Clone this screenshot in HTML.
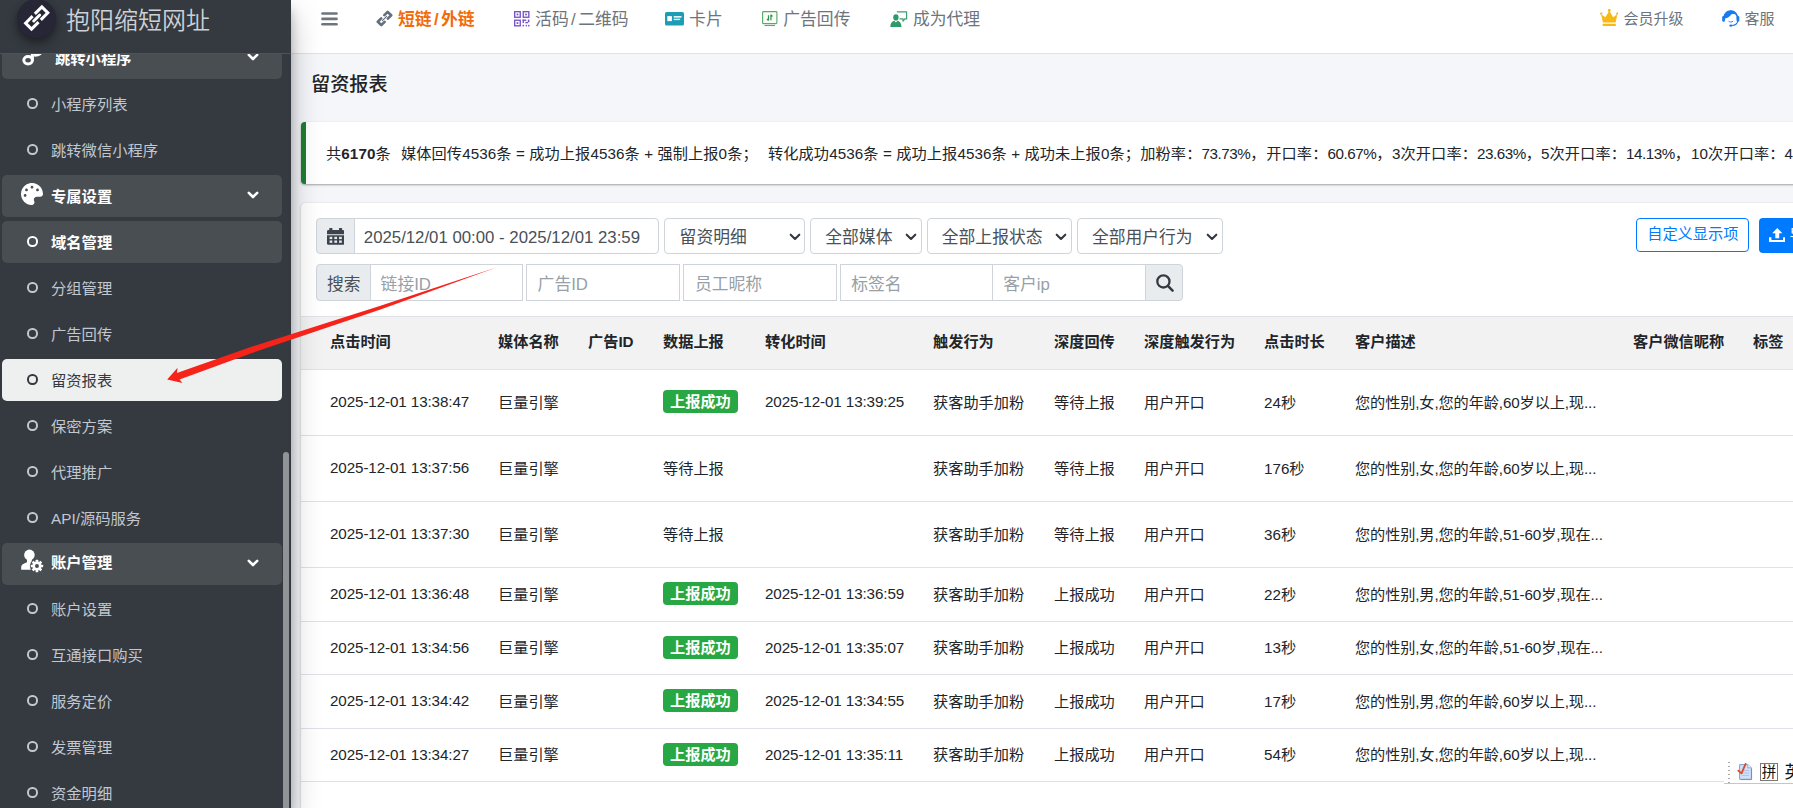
<!DOCTYPE html>
<html lang="zh-CN">
<head>
<meta charset="utf-8">
<title>留资报表</title>
<style>
*{box-sizing:border-box;margin:0;padding:0}
html,body{width:1793px;height:808px;overflow:hidden}
body{background:#f4f6f9;font-family:"Liberation Sans","Noto Sans CJK SC",sans-serif;color:#212529;position:relative;font-size:15.2px}
svg{display:block}
/* sidebar */
#side{position:absolute;left:0;top:0;width:290.500px;height:808px;background:#343a40;z-index:20;box-shadow:0 14px 28px rgba(0,0,0,.25),0 10px 10px rgba(0,0,0,.22);overflow:hidden}
#brand{position:absolute;left:0;top:0;width:291px;height:54px;border-bottom:1px solid #4b545c;background:#343a40;z-index:3}
#logo{position:absolute;left:17px;top:-1px;width:39px;height:39px;border-radius:50%;background:#272637;box-shadow:0 3px 6px rgba(0,0,0,.28),0 7px 12px rgba(0,0,0,.22)}
#logo svg{position:absolute;left:0;top:0;width:39px;height:39px}
#brand .bt{position:absolute;left:66px;top:5px;font-size:24px;line-height:32px;font-weight:350;color:#cdd1d6;white-space:nowrap}
.ni{position:absolute;left:2px;width:280px;height:42px;border-radius:5px;color:#c2c7d0;font-size:15.3px;line-height:42px;white-space:nowrap}
.ni.hd{background:#494e53;color:#fff;font-weight:700}
.ni.act{background:#eeefef;color:#343a40}
.ni .tx{position:absolute;left:49px;top:.5px}
.ni .dot{position:absolute;left:25.300px;top:15.300px;width:10.400px;height:10.400px;border:2px solid #c2c7d0;border-radius:50%}
.ni.hd .dot{border-color:#fff}
.ni.act .dot{border-color:#343a40}
.ni .chev{position:absolute;left:245.300px;top:15.600px;width:12px;height:9px}
.ni .ic{position:absolute}
#sbar{position:absolute;left:282.500px;top:452px;width:6.500px;height:380px;border-radius:4px;background:#909497;z-index:4}
/* navbar */
#top{position:absolute;left:290px;top:0;width:1503px;height:54px;background:#fff;border-bottom:1px solid #dee2e6;z-index:5}
#top .it{position:absolute;top:1px;height:38px;line-height:38px;font-size:16.8px;color:#6c757d;white-space:nowrap}
#top .it.on{color:#f26b0a;font-weight:700}
#top .it.sm{font-size:15px}
#top .it i{font-style:normal;padding:0 2.400px}
#top svg{position:absolute}
/* content */
#title{position:absolute;left:311px;top:69px;font-size:19.2px;line-height:32px;color:#212529;font-weight:500;white-space:nowrap}
#callout{position:absolute;left:301px;top:122.400px;width:1600px;height:61.800px;background:#fff;border-left:5px solid #1e7e34;border-radius:4px;box-shadow:0 1px 3px rgba(0,0,0,.12),0 1px 2px rgba(0,0,0,.24)}
#callout span{position:absolute;top:15.300px;letter-spacing:.1px;line-height:32px;font-size:15.2px;white-space:nowrap;color:#212529}
#callout b{font-weight:700}
#callout i{font-style:normal;letter-spacing:-.45px}
#card{position:absolute;left:301px;top:203px;width:1600px;height:700px;background:#fff;border-radius:4px;box-shadow:0 0 1px rgba(0,0,0,.125),0 1px 3px rgba(0,0,0,.2)}
.fld{position:absolute;height:36.400px;border:1px solid #ced4da;background:#fff;font-size:16.8px;line-height:35px;color:#495057;white-space:nowrap;overflow:hidden}
.fld span{position:absolute;top:1.400px}
.fld.ad{background:#e9ecef}
.fld.ph{color:#989fa6}
.fld.sel{border-radius:4px}
.fld svg{position:absolute}
.btn{position:absolute;height:34.500px;border-radius:4px;font-size:15.2px;line-height:32px;white-space:nowrap}
#tbl{position:absolute;left:0;top:113px;width:1600px;border-collapse:collapse;table-layout:fixed}
#tbl th,#tbl td{text-align:left;padding:0 0 4px 0;white-space:nowrap;overflow:hidden;font-size:15.2px;color:#212529;vertical-align:middle}
#tbl th{padding-bottom:6px;height:53px;background:#f2f2f2;font-weight:700;border-top:1px solid #dee2e6;border-bottom:1px solid #dee2e6}
#tbl td{border-bottom:1px solid #dee2e6;padding-bottom:3.400px}
#tbl tr.a td{height:66px}
#tbl tr.b td{height:53.500px}
#tbl tr.c td{height:69px}
.bdg{display:inline-block;background:#28a745;color:#fff;font-weight:700;font-size:15.2px;line-height:23px;height:23px;padding:0 7px;border-radius:4px;position:relative;top:1px}
.num{letter-spacing:-.1px;position:relative;top:1.200px}
.dsc{letter-spacing:-.12px}
#arrow{position:absolute;left:0;top:0;width:1793px;height:808px;z-index:50;pointer-events:none}
#ime{position:absolute;left:1724px;top:756px;width:80px;height:28px;background:#fff;border-bottom:1px solid #c6c6c6;z-index:40;font-size:15px;color:#111}
#ime span{position:absolute;white-space:nowrap}
</style>
</head>
<body>
<div id="side">
<div id="brand"><div id="logo"><svg viewBox="-19.500 -19.500 39 39"><g transform="translate(.2 -.5) rotate(-45)" fill="none" stroke="#fff" stroke-width="3"><path d="M-1.600 -4.200H-11.500V4.200H-1.600"/><path d="M1.600 -4.200H11.500V4.200H1.600"/><path d="M-4.200 0H4.200" stroke-linecap="round"/></g></svg></div><div class="bt">抱阳缩短网址</div></div>
<div class="ni hd" style="top:37px"><svg class="ic" style="left:19px;top:4px;width:24px;height:26px" viewBox="0 0 24 26"><ellipse cx="7.100" cy="19.300" rx="4.300" ry="3.700" fill="none" stroke="#fff" stroke-width="3"/><rect x="9.900" y="4" width="3" height="15.500" fill="#fff"/><path d="M12.900 11 C15.500 12.200 18.500 12.200 20.400 11.200 L20.400 13.800 C18 15.400 15 15.900 12.900 15.600Z" fill="#fff"/></svg><span class="tx" style="left:53px">跳转小程序</span><svg class="chev" viewBox="0 0 12 9"><path d="M1.800 1.800 L6 6 L10.200 1.800" fill="none" stroke="#fff" stroke-width="2.600" stroke-linecap="round" stroke-linejoin="round"/></svg></div>
<div class="ni" style="top:83px"><span class="dot"></span><span class="tx">小程序列表</span></div>
<div class="ni" style="top:129px"><span class="dot"></span><span class="tx">跳转微信小程序</span></div>
<div class="ni hd" style="top:175px"><svg class="ic" style="left:19.300px;top:8px;width:22px;height:22px" viewBox="0 0 512 512"><path fill="#fff" d="M204.3 5C104.9 24.4 24.8 104.3 5.2 203.4c-37 187 131.7 326.4 258.8 306.700 41.200-6.400 61.400-54.600 42.500-91.700-23.100-45.400 9.900-98.400 60.900-98.400h79.700c35.800 0 64.800-29.600 64.900-65.300C511.500 97.100 368.100-26.900 204.300 5zM96 320c-17.700 0-32-14.300-32-32s14.300-32 32-32 32 14.300 32 32-14.300 32-32 32zm32-128c-17.700 0-32-14.300-32-32s14.300-32 32-32 32 14.300 32 32-14.300 32-32 32zm128-64c-17.700 0-32-14.300-32-32s14.300-32 32-32 32 14.300 32 32-14.300 32-32 32zm128 64c-17.700 0-32-14.300-32-32s14.300-32 32-32 32 14.300 32 32-14.300 32-32 32z"/></svg><span class="tx">专属设置</span><svg class="chev" viewBox="0 0 12 9"><path d="M1.800 1.800 L6 6 L10.200 1.800" fill="none" stroke="#fff" stroke-width="2.600" stroke-linecap="round" stroke-linejoin="round"/></svg></div>
<div class="ni hd" style="top:221px"><span class="dot"></span><span class="tx">域名管理</span></div>
<div class="ni" style="top:267px"><span class="dot"></span><span class="tx">分组管理</span></div>
<div class="ni" style="top:313px"><span class="dot"></span><span class="tx">广告回传</span></div>
<div class="ni act" style="top:359px"><span class="dot"></span><span class="tx">留资报表</span></div>
<div class="ni" style="top:405px"><span class="dot"></span><span class="tx">保密方案</span></div>
<div class="ni" style="top:451px"><span class="dot"></span><span class="tx">代理推广</span></div>
<div class="ni" style="top:497px"><span class="dot"></span><span class="tx">API/源码服务</span></div>
<div class="ni hd" style="top:543px"><svg class="ic" style="left:17px;top:5px;width:26px;height:26px" viewBox="0 0 26 26"><g fill="#fff"><ellipse cx="10.400" cy="6.900" rx="5.300" ry="5.300"/><path d="M2.200 21.700V19.300C2.200 16.600 4.800 15.500 8 14.300V10.500H12.800V14.300C14.200 14.700 15.400 15.200 16.500 15.900L14 21.700Z"/></g><circle cx="17.950" cy="18" r="7.100" fill="#494e53"/><g transform="translate(17.950 18)" fill="#fff"><circle r="4.500"/><rect x="-1.350" y="-6.150" width="2.700" height="3" rx=".5" transform="rotate(0)"/><rect x="-1.350" y="-6.150" width="2.700" height="3" rx=".5" transform="rotate(45)"/><rect x="-1.350" y="-6.150" width="2.700" height="3" rx=".5" transform="rotate(90)"/><rect x="-1.350" y="-6.150" width="2.700" height="3" rx=".5" transform="rotate(135)"/><rect x="-1.350" y="-6.150" width="2.700" height="3" rx=".5" transform="rotate(180)"/><rect x="-1.350" y="-6.150" width="2.700" height="3" rx=".5" transform="rotate(225)"/><rect x="-1.350" y="-6.150" width="2.700" height="3" rx=".5" transform="rotate(270)"/><rect x="-1.350" y="-6.150" width="2.700" height="3" rx=".5" transform="rotate(315)"/></g><circle cx="17.950" cy="18" r="2" fill="#494e53"/></svg><span class="tx" style="top:-.6px">账户管理</span><svg class="chev" viewBox="0 0 12 9"><path d="M1.800 1.800 L6 6 L10.200 1.800" fill="none" stroke="#fff" stroke-width="2.600" stroke-linecap="round" stroke-linejoin="round"/></svg></div>
<div class="ni" style="top:588px"><span class="dot"></span><span class="tx">账户设置</span></div>
<div class="ni" style="top:634px"><span class="dot"></span><span class="tx">互通接口购买</span></div>
<div class="ni" style="top:680px"><span class="dot"></span><span class="tx">服务定价</span></div>
<div class="ni" style="top:726px"><span class="dot"></span><span class="tx">发票管理</span></div>
<div class="ni" style="top:772px"><span class="dot"></span><span class="tx">资金明细</span></div>
<div id="sbar"></div>
</div>
<div id="top">
<svg style="left:30.5px;top:12px;width:17px;height:14px" viewBox="0 0 17 14"><g stroke="#6c757d" stroke-width="2.600" stroke-linecap="round"><path d="M1.500 1.500H15.500"/><path d="M1.500 6.900H15.500"/><path d="M1.500 12.300H15.500"/></g></svg>
<svg style="left:85.9px;top:10.400px;width:17px;height:17px" viewBox="-8.500 -8.500 17 17"><g transform="rotate(-45)" fill="none" stroke="#65707c" stroke-linecap="round" stroke-linejoin="round"><path d="M-2.300 -2.450H-6.950V2.450H-2.300" stroke-width="2.700"/><path d="M2.300 -2.450H6.950V2.450H2.300" stroke-width="2.700"/><path d="M-3 0H3" stroke-width="1.100"/></g></svg>
<div class="it on" style="left:108.0px">短链<i>/</i>外链</div>
<svg style="left:224.0px;top:11px;width:15.500px;height:15.500px" viewBox="0 0 15 15"><g fill="none" stroke="#7853c6" stroke-width="1.300"><rect x=".65" y=".65" width="5.400" height="5.400"/><rect x="8.950" y=".65" width="5.400" height="5.400"/><rect x=".65" y="8.950" width="5.400" height="5.400"/></g><g fill="#7853c6"><rect x="2.500" y="2.500" width="1.700" height="1.700"/><rect x="10.800" y="2.500" width="1.700" height="1.700"/><rect x="2.500" y="10.800" width="1.700" height="1.700"/><rect x="8.300" y="8.300" width="3.600" height="1.300"/><rect x="8.300" y="8.300" width="1.300" height="3.400"/><rect x="13.400" y="8.300" width="1.500" height="2.600"/><rect x="11" y="10.600" width="2.600" height="1.300"/><rect x="8.300" y="13.400" width="1.400" height="1.500"/><rect x="11.300" y="13.400" width="1.300" height="1.500"/><rect x="13.600" y="13.400" width="1.400" height="1.500"/></g></svg>
<div class="it" style="left:245.1px">活码<i>/</i>二维码</div>
<svg style="left:375.3px;top:12px;width:19px;height:13.500px" viewBox="0 0 19 13.500"><rect width="19" height="13.500" rx="1.600" fill="#1d9db4"/><rect x="2.300" y="4.100" width="4.600" height="5" fill="#fff"/><rect x="8.700" y="4.100" width="7.800" height="1.500" fill="#fff"/><rect x="8.700" y="6.700" width="6.400" height="1.400" fill="#e8f5f8"/></svg>
<div class="it" style="left:399.1px">卡片</div>
<svg style="left:471.7px;top:11px;width:16px;height:15.500px" viewBox="0 0 16 15.500"><rect x=".6" y=".6" width="14.300" height="12" rx=".8" fill="#fbfdf4" stroke="#55aa6c" stroke-width="1.150"/><path d="M2.500 14.500H13" stroke="#55aa6c" stroke-width="1.100"/><g fill="none" stroke="#2f8f58" stroke-width="1.200"><path d="M6.500 9.500V4.200M5 7.800L6.500 9.600"/><path d="M8.900 3.800V9.200M10.400 5.500L8.900 3.700"/></g></svg>
<div class="it" style="left:493.3px">广告回传</div>
<svg style="left:600.0px;top:10.500px;width:18px;height:16.500px" viewBox="0 0 18 16.500"><path d="M6.900 .8H16.600V7.900H14.800L13 10.200V7.900H9.500" fill="none" stroke="#3c9f6f" stroke-width="1.200" stroke-linejoin="round"/><ellipse cx="5.900" cy="6.400" rx="2.700" ry="3.100" fill="#2f9a68"/><path d="M.3 16c0-3.600 1.600-5.700 3.900-6.300l1.700 1.700 1.700-1.700c2.300.6 3.900 2.700 3.900 6.300z" fill="#2f9a68"/></svg>
<div class="it" style="left:622.9px">成为代理</div>
<svg style="left:1309.7px;top:8.600px;width:18.500px;height:17.500px" viewBox="0 0 18.500 17.500"><g fill="#f9b915"><path d="M2.900 13.400L1.100 5.200L5.400 8.300L9.250 1.800L13.100 8.300L17.400 5.200L15.600 13.400z"/><circle cx="1.200" cy="4.600" r="1.200"/><circle cx="9.250" cy="1.400" r="1.400"/><circle cx="17.300" cy="4.600" r="1.200"/><rect x="2.700" y="14.800" width="13.100" height="2.300" rx=".3"/></g></svg>
<div class="it sm" style="left:1333.4px;top:0">会员升级</div>
<svg style="left:1432.4px;top:8.600px;width:17.500px;height:18px" viewBox="0 0 17.500 18"><path d="M2 10.800A6.900 6.900 0 1 1 15.500 10.800" fill="none" stroke="#1a7af0" stroke-width="1.700"/><path d="M2 9.700C1.400 4.800 4.700 1.300 8.700 1.300c2.900 0 5.200 1.500 6.300 4.200-2.400-.9-4.300-.7-5.500-.2-1.800 2.700-4.700 4.200-7.500 4.400z" fill="#1a7af0"/><rect x=".2" y="7" width="2.700" height="5.700" rx="1.300" fill="#1a7af0"/><rect x="14.600" y="7" width="2.700" height="5.700" rx="1.300" fill="#1a7af0"/><path d="M15.700 12.300c-.5 2.500-2.500 3.900-5.600 4.200" fill="none" stroke="#1a7af0" stroke-width="1.100"/><ellipse cx="8.900" cy="16.600" rx="1.500" ry="1.200" fill="#1a7af0"/><path d="M6.900 12.400c1.200.9 2.700.9 3.900 0" fill="none" stroke="#1a7af0" stroke-width=".9" stroke-linecap="round"/></svg>
<div class="it sm" style="left:1454.6px;top:0">客服</div>
</div>
<div id="title">留资报表</div>
<div id="callout"><span style="left:20.0px">共<b>6170</b>条</span><span style="left:95.0px">媒体回传4536条 = 成功上报4536条 + 强制上报0条；</span><span style="left:462.0px">转化成功4536条 = 成功上报4536条 + 成功未上报0条；</span><span style="left:834.3px">加粉率：<i>73.73%</i>，</span><span style="left:960.3px">开口率：<i>60.67%</i>，</span><span style="left:1086.0px">3次开口率：<i>23.63%</i>，</span><span style="left:1235.0px">5次开口率：<i>14.13%</i>，</span><span style="left:1385.0px">10次开口率：4.52%</span></div>
<div id="card">
<div class="fld ad" style="left:15.0px;top:15.0px;width:38.5px;border-radius:4px 0 0 4px"><svg style="left:9.500px;top:9.300px;width:17.400px;height:16.800px" viewBox="0 0 17.400 16.800"><g fill="#3b444d"><rect x="2.300" y="0" width="3.100" height="4.600" rx=".6"/><rect x="12" y="0" width="3.100" height="4.600" rx=".6"/><path d="M1.400 2.100H16A1.400 1.400 0 0 1 17.400 3.500V6.200H0V3.500A1.400 1.400 0 0 1 1.400 2.100z"/><path d="M0 7.300H17.400V15.400A1.400 1.400 0 0 1 16 16.800H1.400A1.400 1.400 0 0 1 0 15.400z"/></g><g fill="#e9ecef"><rect x="2.600" y="8.800" width="2.700" height="2.300"/><rect x="7.350" y="8.800" width="2.700" height="2.300"/><rect x="12.100" y="8.800" width="2.700" height="2.300"/><rect x="2.600" y="12.500" width="2.700" height="2.300"/><rect x="7.350" y="12.500" width="2.700" height="2.300"/><rect x="12.100" y="12.500" width="2.700" height="2.300"/></g></svg></div>
<div class="fld " style="left:52.5px;top:15.0px;width:305.5px;border-radius:0 4px 4px 0"><span class="dt" style="left:9.300px">2025/12/01 00:00 - 2025/12/01 23:59</span></div>
<div class="fld sel" style="left:363.0px;top:15.0px;width:141.0px;"><span style="left:14.6px">留资明细</span><svg style="left:123.5px;top:14.300px;width:12px;height:8px" viewBox="0 0 12 8"><path d="M1.700 1.700L6 6L10.300 1.700" fill="none" stroke="#343a40" stroke-width="2.100" stroke-linecap="round" stroke-linejoin="round"/></svg></div>
<div class="fld sel" style="left:509.4px;top:15.0px;width:111.2px;"><span style="left:13.9px">全部媒体</span><svg style="left:93.7px;top:14.300px;width:12px;height:8px" viewBox="0 0 12 8"><path d="M1.700 1.700L6 6L10.300 1.700" fill="none" stroke="#343a40" stroke-width="2.100" stroke-linecap="round" stroke-linejoin="round"/></svg></div>
<div class="fld sel" style="left:626.2px;top:15.0px;width:144.6px;"><span style="left:13.6px">全部上报状态</span><svg style="left:127.1px;top:14.300px;width:12px;height:8px" viewBox="0 0 12 8"><path d="M1.700 1.700L6 6L10.300 1.700" fill="none" stroke="#343a40" stroke-width="2.100" stroke-linecap="round" stroke-linejoin="round"/></svg></div>
<div class="fld sel" style="left:776.0px;top:15.0px;width:145.8px;"><span style="left:13.9px">全部用户行为</span><svg style="left:128.3px;top:14.300px;width:12px;height:8px" viewBox="0 0 12 8"><path d="M1.700 1.700L6 6L10.300 1.700" fill="none" stroke="#343a40" stroke-width="2.100" stroke-linecap="round" stroke-linejoin="round"/></svg></div>
<div class="fld ad" style="left:15.0px;top:61.2px;width:55.3px;border-radius:4px 0 0 4px"><span style="left:9.900px">搜索</span></div>
<div class="fld ph" style="left:69.3px;top:61.2px;width:152.5px;"><span style="left:9.3px">链接ID</span></div>
<div class="fld ph" style="left:225.1px;top:61.2px;width:153.6px;"><span style="left:10.5px">广告ID</span></div>
<div class="fld ph" style="left:382.2px;top:61.2px;width:153.5px;"><span style="left:10.8px">员工昵称</span></div>
<div class="fld ph" style="left:539.1px;top:61.2px;width:152.8px;"><span style="left:10.1px">标签名</span></div>
<div class="fld ph" style="left:691.0px;top:61.2px;width:153.8px;"><span style="left:10.3px">客户ip</span></div>
<div class="fld ad" style="left:844.0px;top:61.2px;width:38.0px;border-radius:0 4px 4px 0"><svg style="left:8.500px;top:8.300px;width:20px;height:20px" viewBox="0 0 20 20"><circle cx="8.400" cy="8.400" r="6.100" fill="none" stroke="#343a40" stroke-width="2.300"/><path d="M12.900 12.900L17.600 17.600" stroke="#343a40" stroke-width="2.500" stroke-linecap="round"/></svg></div>
<div class="btn" style="left:1335.0px;top:15px;width:113px;height:33.800px;border:1px solid #007bff;color:#007bff;background:#fff"><span style="position:absolute;left:10.200px;top:-1px">自定义显示项</span></div>
<div class="btn" style="left:1458.0px;top:15px;width:90px;background:#007bff;color:#fff;line-height:34px"><svg style="position:absolute;left:9.500px;top:9.500px;width:16.500px;height:14.500px" viewBox="0 0 16.500 14.500"><path fill="#fff" d="M8.250 0L13.300 5.300H10.200V10.200H6.300V5.300H3.200z"/><path d="M1.200 9.200V13.300H15.300V9.200" fill="none" stroke="#fff" stroke-width="2.400" stroke-linejoin="round"/></svg><span style="position:absolute;left:30.500px;top:0">导出</span></div>
<table id="tbl"><colgroup><col style="width:29px"><col style="width:168px"><col style="width:90px"><col style="width:75px"><col style="width:102px"><col style="width:168px"><col style="width:121px"><col style="width:90px"><col style="width:120px"><col style="width:91px"><col style="width:278px"><col style="width:120px"><col style="width:200px"></colgroup>
<thead><tr><th></th><th>点击时间</th><th>媒体名称</th><th>广告ID</th><th>数据上报</th><th>转化时间</th><th>触发行为</th><th>深度回传</th><th>深度触发行为</th><th>点击时长</th><th>客户描述</th><th>客户微信昵称</th><th>标签</th><th></th></tr></thead><tbody>
<tr class="a"><td></td><td><span class="num">2025-12-01 13:38:47</span></td><td>巨量引擎</td><td></td><td><span class="bdg">上报成功</span></td><td><span class="num">2025-12-01 13:39:25</span></td><td>获客助手加粉</td><td>等待上报</td><td>用户开口</td><td>24秒</td><td><span class="dsc">您的性别,女,您的年龄,60岁以上,现...</span></td><td></td><td></td><td></td></tr>
<tr class="a"><td></td><td><span class="num">2025-12-01 13:37:56</span></td><td>巨量引擎</td><td></td><td>等待上报</td><td></td><td>获客助手加粉</td><td>等待上报</td><td>用户开口</td><td>176秒</td><td><span class="dsc">您的性别,女,您的年龄,60岁以上,现...</span></td><td></td><td></td><td></td></tr>
<tr class="a"><td></td><td><span class="num">2025-12-01 13:37:30</span></td><td>巨量引擎</td><td></td><td>等待上报</td><td></td><td>获客助手加粉</td><td>等待上报</td><td>用户开口</td><td>36秒</td><td><span class="dsc">您的性别,男,您的年龄,51-60岁,现在...</span></td><td></td><td></td><td></td></tr>
<tr class="b"><td></td><td><span class="num">2025-12-01 13:36:48</span></td><td>巨量引擎</td><td></td><td><span class="bdg">上报成功</span></td><td><span class="num">2025-12-01 13:36:59</span></td><td>获客助手加粉</td><td>上报成功</td><td>用户开口</td><td>22秒</td><td><span class="dsc">您的性别,男,您的年龄,51-60岁,现在...</span></td><td></td><td></td><td></td></tr>
<tr class="b"><td></td><td><span class="num">2025-12-01 13:34:56</span></td><td>巨量引擎</td><td></td><td><span class="bdg">上报成功</span></td><td><span class="num">2025-12-01 13:35:07</span></td><td>获客助手加粉</td><td>上报成功</td><td>用户开口</td><td>13秒</td><td><span class="dsc">您的性别,女,您的年龄,51-60岁,现在...</span></td><td></td><td></td><td></td></tr>
<tr class="b"><td></td><td><span class="num">2025-12-01 13:34:42</span></td><td>巨量引擎</td><td></td><td><span class="bdg">上报成功</span></td><td><span class="num">2025-12-01 13:34:55</span></td><td>获客助手加粉</td><td>上报成功</td><td>用户开口</td><td>17秒</td><td><span class="dsc">您的性别,男,您的年龄,60岁以上,现...</span></td><td></td><td></td><td></td></tr>
<tr class="b"><td></td><td><span class="num">2025-12-01 13:34:27</span></td><td>巨量引擎</td><td></td><td><span class="bdg">上报成功</span></td><td><span class="num">2025-12-01 13:35:11</span></td><td>获客助手加粉</td><td>上报成功</td><td>用户开口</td><td>54秒</td><td><span class="dsc">您的性别,女,您的年龄,60岁以上,现...</span></td><td></td><td></td><td></td></tr>
<tr class="c"><td></td><td><span class="num">2025-12-01 13:33:58</span></td><td>巨量引擎</td><td></td><td>等待上报</td><td></td><td>获客助手加粉</td><td>等待上报</td><td>用户开口</td><td>31秒</td><td><span class="dsc">您的性别,女,您的年龄,51-60岁,现在...</span></td><td></td><td></td><td></td></tr>
</tbody></table>
</div>
<svg id="arrow" viewBox="0 0 1793 808"><polygon points="167.2,379.4 177.6,367.8 176.9,373.0 250.0,347.2 380.5,305.8 497.0,267.3 380.5,309.5 250.0,353.7 179.5,379.6 182.5,382.9" fill="#f5231a"/></svg>
<div id="ime"><div style="position:absolute;left:4.200px;top:5.600px;width:1.700px;height:23px;background:repeating-linear-gradient(to bottom,#a8a8a8 0,#a8a8a8 1.500px,transparent 1.500px,transparent 4px)"></div><svg style="position:absolute;left:11px;top:6px;width:18px;height:19px" viewBox="0 0 18 19"><path d="M4.600 2.600H12.800L16.400 5.800V17.300H4.600z" fill="#cfe0f7" stroke="#7f9fd0" stroke-width="1"/><path d="M6.800 8.500H14M6.800 11H14M6.800 13.500H14" stroke="#a9c3ea" stroke-width=".9"/><path d="M12.800 2.600V5.800H16.400" fill="#eef4fd" stroke="#7f9fd0" stroke-width=".8"/><path d="M16.600 7V17.600H6" fill="none" stroke="#6e7f9a" stroke-width=".9" opacity=".7"/><path d="M3.300 8.600L6.500 11.400L10.600 1.900" fill="none" stroke="#e2472a" stroke-width="1.800" stroke-linecap="round" stroke-linejoin="round"/></svg><span style="left:36.200px;top:7px;width:17.600px;height:17.800px;border:1px solid #7a7a7a;line-height:17px;font-size:14.500px;text-align:center;background:#fff">拼</span><span style="left:60.400px;top:4.800px;line-height:22px;font-size:17.500px">英</span></div>
</body>
</html>
